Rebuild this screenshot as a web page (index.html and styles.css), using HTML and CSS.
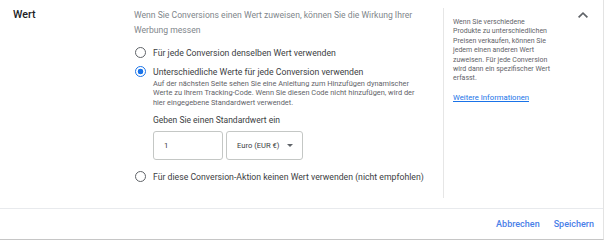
FILE: index.html
```html
<!DOCTYPE html>
<html lang="de">
<head>
    <meta charset="UTF-8">
    <title>Wert</title>
    <link rel="stylesheet" href="styles.css">
</head>
<body>
    <div class="card">
        <div class="section">
            <div class="section-title">Wert</div>

            <div class="section-main">
                <p class="intro">Wenn Sie Conversions einen Wert zuweisen, können Sie die Wirkung Ihrer Werbung messen</p>

                <label class="option">
                    <span class="radio"></span>
                    <span>Für jede Conversion denselben Wert verwenden</span>
                </label>

                <label class="option">
                    <span class="radio checked"></span>
                    <span>Unterschiedliche Werte für jede Conversion verwenden</span>
                </label>
                <div class="option-body">
                    <p class="hint">Auf der nächsten Seite sehen Sie eine Anleitung zum Hinzufügen dynamischer Werte zu Ihrem Tracking-Code. Wenn Sie diesen Code nicht hinzufügen, wird der hier eingegebene Standardwert verwendet.</p>
                    <div class="field-label">Geben Sie einen Standardwert ein</div>
                    <div class="fields">
                        <div class="input">1</div>
                        <div class="select">
                            <span>Euro (EUR €)</span>
                            <svg width="6" height="3" viewBox="0 0 6 3"><path d="M0 0h6L3 3z" fill="#5f6368"/></svg>
                        </div>
                    </div>
                </div>

                <label class="option last">
                    <span class="radio"></span>
                    <span>Für diese Conversion-Aktion keinen Wert verwenden (nicht empfohlen)</span>
                </label>
            </div>

            <div class="section-aside">
                <p>Wenn Sie verschiedene Produkte zu unterschiedlichen Preisen verkaufen, können Sie jedem einen anderen Wert zuweisen. Für jede Conversion wird dann ein spezifischer Wert erfasst.</p>
                <a href="#">Weitere Informationen</a>
            </div>

            <div class="collapse">
                <svg width="10" height="6" viewBox="0 0 10 6"><path d="M1.2 6L5 2.3 8.8 6 10 4.8 5 0 0 4.8z" fill="#5f6368"/></svg>
            </div>
        </div>

        <div class="footer">
            <button>Abbrechen</button>
            <button>Speichern</button>
        </div>
    </div>
</body>
</html>
```

FILE: styles.css
```css
body {
    margin: 0;
    font-family: Roboto, "Noto Sans", sans-serif;
    background-color: #fff;
    color: #3c4043;
}

.card {
    width: 603px;
    height: 239px;
    border-right: 1px solid #e3e3e3;
    border-bottom: 1px solid #c6c6c6;
    display: flex;
    flex-direction: column;
}

.section {
    display: flex;
    height: 208px;
    border-bottom: 1px solid #e8eaed;
}

/* left label column */
.section-title {
    width: 121px;
    flex-shrink: 0;
    padding: 8px 0 0 13px;
    font-size: 10.7px;
    line-height: 14px;
    font-weight: 500;
    color: #202124;
}

/* middle column */
.section-main {
    width: 309px;
    flex-shrink: 0;
    padding-top: 7.5px;
}

.intro {
    margin: 0 0 5.5px;
    padding-right: 20px;
    font-size: 8.6px;
    line-height: 15px;
    color: #80868b;
}

.option {
    display: flex;
    align-items: center;
    height: 19px;
    font-size: 8.7px;
    color: #3c4043;
}

.option.last {
    margin-top: 7px;
}

.radio {
    box-sizing: border-box;
    width: 11px;
    height: 11px;
    margin: 0 7px 0 1px;
    border: 1.4px solid #5f6368;
    border-radius: 50%;
    flex-shrink: 0;
}

.radio.checked {
    border-color: #1a73e8;
    background: radial-gradient(circle, #1a73e8 0 2.6px, transparent 3.1px);
}

.option-body {
    padding-left: 19px;
}

.hint {
    width: 272px;
    margin: -2px 0 0;
    font-size: 7.4px;
    line-height: 9.4px;
    color: #5f6368;
}

.field-label {
    margin-top: 6.8px;
    font-size: 8.5px;
    line-height: 12px;
    color: #3c4043;
}

.fields {
    display: flex;
    gap: 3px;
    margin-top: 5px;
}

.input, .select {
    box-sizing: border-box;
    height: 29px;
    display: flex;
    align-items: center;
    border: 1px solid #c4c7c5;
    border-radius: 3px;
    font-size: 7.6px;
    color: #3c4043;
}

.input {
    width: 70px;
    padding-left: 10px;
}

.select {
    width: 77px;
    padding-left: 10px;
    gap: 8px;
}

/* right help column */
.section-aside {
    width: 125px;
    height: 180px;
    margin-top: 8px;
    padding: 10px 0 0 9px;
    border-left: 1px solid #e6e6e6;
    font-size: 7px;
    color: #5f6368;
}

.section-aside p {
    width: 97.5px;
    margin: 0 0 9px;
    line-height: 9.4px;
}

.section-aside a {
    font-size: 7.7px;
    line-height: 10px;
    color: #1a73e8;
}

.collapse {
    padding-top: 12px;
}

.collapse svg {
    display: block;
}

.footer {
    flex: 1;
    display: flex;
    justify-content: flex-end;
    align-items: center;
    gap: 14px;
    padding-right: 9px;
}

.footer button {
    padding: 0;
    background: none;
    border: none;
    font-family: inherit;
    font-size: 9px;
    font-weight: 500;
    color: #4a80e8;
    cursor: pointer;
}
```
